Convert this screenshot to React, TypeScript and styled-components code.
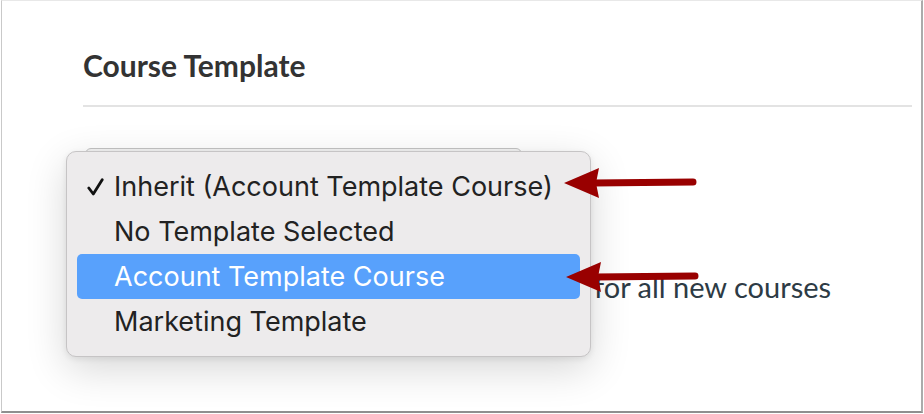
import React from "react";
import styled, { createGlobalStyle } from "styled-components";

const GlobalStyle = createGlobalStyle`
    html, body {
        margin: 0;
        padding: 0;
        background: #fff;
    }
    body {
        font-family: Lato, "Liberation Sans", sans-serif;
    }
`;

const Frame = styled.div`
    position: relative;
    box-sizing: border-box;
    width: 922px;
    height: 413px;
    margin-left: 1px;
    padding: 0 9px 0 81px;
    background: #fff;
    border-left: 1px solid #c9c9c9;
    border-top: 1px solid #e8e8e8;
    border-right: 2px solid #ababab;
    border-bottom: 2px solid #8f8f8f;
    overflow: hidden;
`;

const Header = styled.div`
    box-sizing: border-box;
    height: 106px;
    padding-top: 49px;
    border-bottom: 2px solid #e3e3e3;
`;

const Title = styled.h2`
    margin: 0;
    font-family: Lato, "Liberation Sans", sans-serif;
    font-weight: 700;
    font-size: 30px;
    line-height: 30px;
    color: #333;
`;

const Field = styled.div`
    display: flex;
    flex-direction: column;
    padding: 41px 0 0 2px;
`;

const SelectBox = styled.div`
    box-sizing: border-box;
    width: 437px;
    height: 40px;
    border: 1px solid #c4c4c4;
    border-radius: 6px;
    background: #f5f5f5;
`;

const HelpRow = styled.div`
    display: flex;
    margin-top: 84px;
    font-size: 29px;
    line-height: 30px;
    color: #2d3b45;
    white-space: nowrap;
`;

const HelpLead = styled.span`
    width: 507px;
    text-align: right;
`;

const HelpTail = styled.span`
    padding-left: 2px;
`;

const Menu = styled.div`
    position: absolute;
    left: 64px;
    top: 150px;
    box-sizing: border-box;
    width: 525px;
    padding: 12px 10px;
    background: #edebec;
    border: 1px solid #c6c4c5;
    border-radius: 10px;
    box-shadow: 0 12px 40px rgba(0, 0, 0, 0.16), 0 2px 6px rgba(0, 0, 0, 0.08);
    font-family: Inter, "Noto Sans", sans-serif;
`;

const Item = styled.div<{ $active?: boolean }>`
    display: flex;
    align-items: center;
    height: 45px;
    padding-left: 10px;
    border-radius: 5px;
    font-size: 27px;
    color: ${({ $active }) => ($active ? "#fff" : "#222")};
    background: ${({ $active }) => ($active ? "#58a1fc" : "transparent")};
    white-space: nowrap;
`;

const CheckSlot = styled.span`
    display: flex;
    align-items: center;
    width: 27px;
    flex: none;
`;

const ArrowSvg = styled.svg<{ $x: number; $y: number }>`
    position: absolute;
    left: ${({ $x }) => $x}px;
    top: ${({ $y }) => $y}px;
    pointer-events: none;
`;

const Arrow = ({ x, y }: { x: number; y: number }) => (
    <ArrowSvg $x={x} $y={y} width="140" height="34" viewBox="0 0 140 34">
        <line x1="30" y1="17" x2="130" y2="16" stroke="#990000" strokeWidth="7" strokeLinecap="round" />
        <polygon points="1,17 36,2 33,17 36,32" fill="#990000" />
    </ArrowSvg>
);

const options = [
    "Inherit (Account Template Course)",
    "No Template Selected",
    "Account Template Course",
    "Marketing Template",
];

export default function App() {
    return (
        <>
            <GlobalStyle />
            <Frame>
                <Header>
                    <Title>Course Template</Title>
                </Header>
                <Field>
                    <SelectBox />
                    <HelpRow>
                        <HelpLead>Template will be used</HelpLead>
                        <HelpTail>for all new courses</HelpTail>
                    </HelpRow>
                </Field>
                <Menu>
                    {options.map((label, i) => (
                        <Item key={label} $active={i === 2}>
                            <CheckSlot>
                                {i === 0 && (
                                    <svg width="17" height="18" viewBox="0 0 17 18">
                                        <path d="M1.8 10 L6.3 16 L15.2 1.8" fill="none" stroke="#111" strokeWidth="2.8" strokeLinecap="round" strokeLinejoin="round" />
                                    </svg>
                                )}
                            </CheckSlot>
                            {label}
                        </Item>
                    ))}
                </Menu>
                <Arrow x={561} y={165} />
                <Arrow x={563} y={259} />
            </Frame>
        </>
    );
}
